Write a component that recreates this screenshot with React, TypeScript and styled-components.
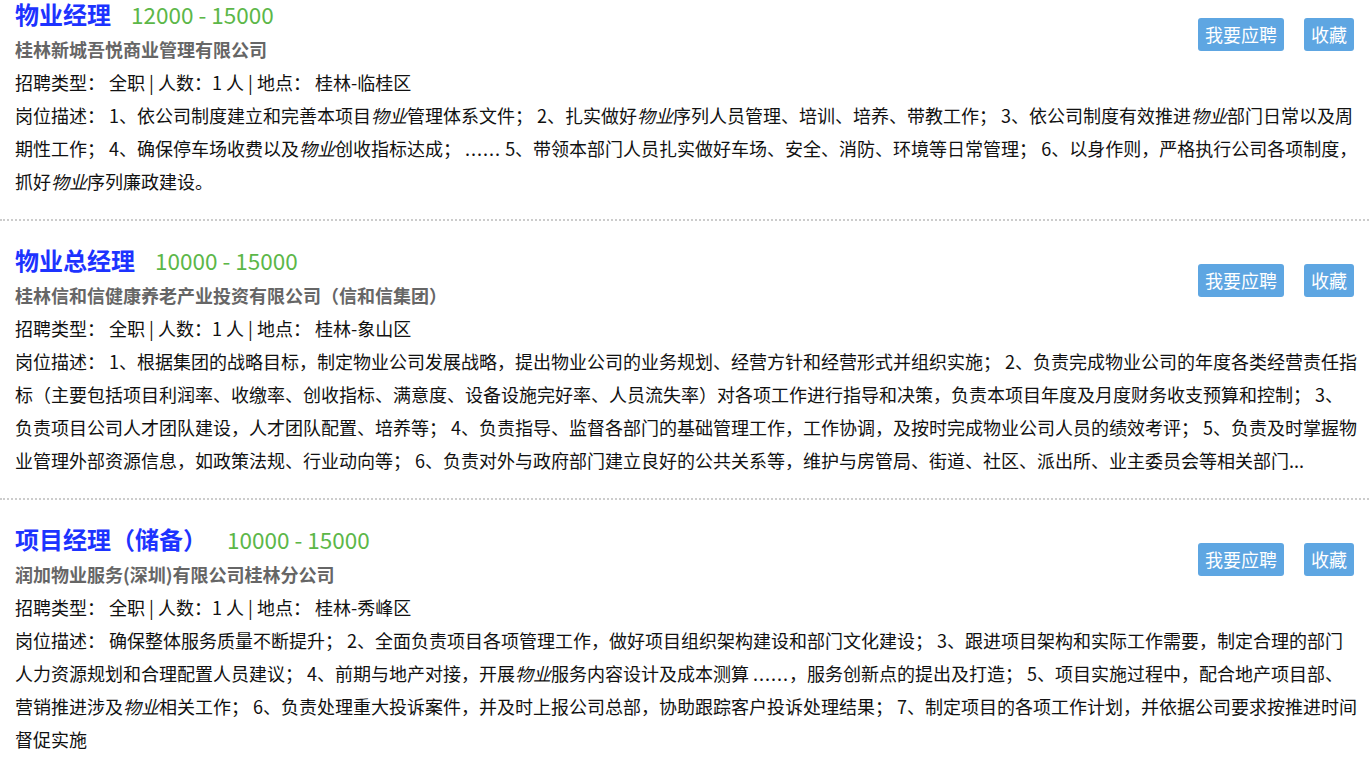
import React from 'react'
import styled, { createGlobalStyle } from 'styled-components'

const GlobalStyle = createGlobalStyle`
  html, body {
    margin: 0;
    padding: 0;
    background: #fff;
  }
  body {
    font-family: "Noto Sans CJK SC", "Microsoft YaHei", sans-serif;
    color: #111;
  }
`

const List = styled.div`
  width: 1369px;
`

const Item = styled.div`
  padding: 25px 9px 21px 15px;
  border-bottom: 2px dotted #ccc;

  &:first-child {
    padding-top: 0;
  }
  &:last-child {
    border-bottom: none;
  }
`

const Header = styled.div`
  display: flex;
  justify-content: space-between;
  align-items: flex-start;
`

const TitleRow = styled.div`
  display: flex;
  align-items: baseline;
  height: 28px;
  line-height: 28px;
`

const Title = styled.span`
  font-size: 24px;
  font-weight: bold;
  color: #1d33ff;
`

const Salary = styled.span`
  margin-left: 20px;
  font-size: 22.5px;
  color: #5cb748;
`

const Company = styled.div`
  margin-top: 5px;
  font-size: 18px;
  line-height: 33px;
  font-weight: bold;
  color: #666;
`

const Actions = styled.div`
  display: flex;
  gap: 20px;
  margin-top: 18px;
  margin-right: 6px;
`

const ActionButton = styled.button`
  height: 33px;
  padding: 0 7px;
  border: none;
  border-radius: 3px;
  background: #5ea6e2;
  color: #fff;
  font-family: inherit;
  font-size: 18px;
  line-height: 33px;
  cursor: pointer;
`

const Line = styled.div`
  font-size: 18px;
  line-height: 33px;
  color: #111;
  word-break: break-all;
`

const Keyword = styled.em`
  font-style: italic;
`

const Dots = styled.span`
  letter-spacing: 1px;
`

type Job = {
  title: string
  salary: string
  company: string
  location: string
  desc: React.ReactNode
}

const jobs: Job[] = [
  {
    title: '物业经理',
    salary: '12000 - 15000',
    company: '桂林新城吾悦商业管理有限公司',
    location: '桂林-临桂区',
    desc: (
      <>
        1、依公司制度建立和完善本项目<Keyword>物业</Keyword>管理体系文件； 2、扎实做好<Keyword>物业</Keyword>序列人员管理、培训、培养、带教工作； 3、依公司制度有效推进<Keyword>物业</Keyword>部门日常以及周期性工作； 4、确保停车场收费以及<Keyword>物业</Keyword>创收指标达成； <Dots>......</Dots> 5、带领本部门人员扎实做好车场、安全、消防、环境等日常管理； 6、以身作则，严格执行公司各项制度，抓好<Keyword>物业</Keyword>序列廉政建设。
      </>
    ),
  },
  {
    title: '物业总经理',
    salary: '10000 - 15000',
    company: '桂林信和信健康养老产业投资有限公司（信和信集团）',
    location: '桂林-象山区',
    desc: (
      <>
        1、根据集团的战略目标，制定物业公司发展战略，提出物业公司的业务规划、经营方针和经营形式并组织实施； 2、负责完成物业公司的年度各类经营责任指标（主要包括项目利润率、收缴率、创收指标、满意度、设备设施完好率、人员流失率）对各项工作进行指导和决策，负责本项目年度及月度财务收支预算和控制； 3、负责项目公司人才团队建设，人才团队配置、培养等； 4、负责指导、监督各部门的基础管理工作，工作协调，及按时完成物业公司人员的绩效考评； 5、负责及时掌握物业管理外部资源信息，如政策法规、行业动向等； 6、负责对外与政府部门建立良好的公共关系等，维护与房管局、街道、社区、派出所、业主委员会等相关部门...
      </>
    ),
  },
  {
    title: '项目经理（储备）',
    salary: '10000 - 15000',
    company: '润加物业服务(深圳)有限公司桂林分公司',
    location: '桂林-秀峰区',
    desc: (
      <>
        确保整体服务质量不断提升； 2、全面负责项目各项管理工作，做好项目组织架构建设和部门文化建设； 3、跟进项目架构和实际工作需要，制定合理的部门人力资源规划和合理配置人员建议； 4、前期与地产对接，开展<Keyword>物业</Keyword>服务内容设计及成本测算 <Dots>......</Dots>，服务创新点的提出及打造； 5、项目实施过程中，配合地产项目部、营销推进涉及<Keyword>物业</Keyword>相关工作； 6、负责处理重大投诉案件，并及时上报公司总部，协助跟踪客户投诉处理结果； 7、制定项目的各项工作计划，并依据公司要求按推进时间督促实施
      </>
    ),
  },
]

const JobItem = ({ job }: { job: Job }) => (
  <Item>
    <Header>
      <div>
        <TitleRow>
          <Title>{job.title}</Title>
          <Salary>{job.salary}</Salary>
        </TitleRow>
        <Company>{job.company}</Company>
      </div>
      <Actions>
        <ActionButton>我要应聘</ActionButton>
        <ActionButton>收藏</ActionButton>
      </Actions>
    </Header>
    <Line>招聘类型： 全职 | 人数：1 人 | 地点： {job.location}</Line>
    <Line>岗位描述： {job.desc}</Line>
  </Item>
)

const App = () => (
  <>
    <GlobalStyle />
    <List>
      {jobs.map((job) => (
        <JobItem key={job.title} job={job} />
      ))}
    </List>
  </>
)

export default App
